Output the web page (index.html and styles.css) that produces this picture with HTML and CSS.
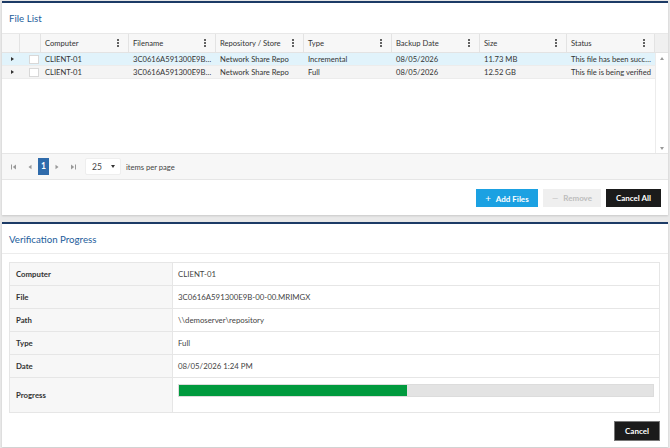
FILE: index.html
```html
<!DOCTYPE html>
<html lang="en">
<head>
    <meta charset="UTF-8">
    <meta name="viewport" content="width=device-width, initial-scale=1.0">
    <title>File Verification</title>
    <link rel="stylesheet" href="styles.css">
</head>
<body>
    <div class="panel files">
        <div class="panel-title">File List</div>

        <div class="grid">
            <div class="grid-head">
                <div class="hcell"></div>
                <div class="hcell"></div>
                <div class="hcell">Computer <span class="kebab"><i></i><i></i><i></i></span></div>
                <div class="hcell">Filename <span class="kebab"><i></i><i></i><i></i></span></div>
                <div class="hcell">Repository / Store <span class="kebab"><i></i><i></i><i></i></span></div>
                <div class="hcell">Type <span class="kebab"><i></i><i></i><i></i></span></div>
                <div class="hcell">Backup Date <span class="kebab"><i></i><i></i><i></i></span></div>
                <div class="hcell">Size <span class="kebab"><i></i><i></i><i></i></span></div>
                <div class="hcell">Status <span class="kebab"><i></i><i></i><i></i></span></div>
                <div class="hcell"></div>
            </div>

            <div class="grid-body">
                <div class="rows">
                    <div class="row selected">
                        <div class="cell expander"><span class="tri-right"></span></div>
                        <div class="cell check"><span class="box"></span></div>
                        <div class="cell">CLIENT-01</div>
                        <div class="cell">3C0616A591300E9B-00-00.MRIMGX</div>
                        <div class="cell">Network Share Repo</div>
                        <div class="cell">Incremental</div>
                        <div class="cell">08/05/2026</div>
                        <div class="cell">11.73 MB</div>
                        <div class="cell">This file has been successfully verified</div>
                    </div>
                    <div class="row alt">
                        <div class="cell expander"><span class="tri-right"></span></div>
                        <div class="cell check"><span class="box"></span></div>
                        <div class="cell">CLIENT-01</div>
                        <div class="cell">3C0616A591300E9B-00-01.MRIMGX</div>
                        <div class="cell">Network Share Repo</div>
                        <div class="cell">Full</div>
                        <div class="cell">08/05/2026</div>
                        <div class="cell">12.52 GB</div>
                        <div class="cell">This file is being verified</div>
                    </div>
                </div>
                <div class="scrollbar">
                    <span class="sb-up"></span>
                    <span class="sb-down"></span>
                </div>
            </div>
        </div>

        <div class="pager">
            <span class="pg-icon">
                <svg width="6" height="6" viewBox="0 0 6 6"><rect x="0" y="0.5" width="1" height="5" fill="#999"/><path d="M5 0.5 L1.8 3 L5 5.5 Z" fill="#999"/></svg>
            </span>
            <span class="pg-icon">
                <svg width="6" height="6" viewBox="0 0 6 6"><path d="M4.5 0.8 L1.5 3 L4.5 5.2 Z" fill="#999"/></svg>
            </span>
            <span class="pg-current">1</span>
            <span class="pg-icon">
                <svg width="6" height="6" viewBox="0 0 6 6"><path d="M1.5 0.8 L4.5 3 L1.5 5.2 Z" fill="#999"/></svg>
            </span>
            <span class="pg-icon">
                <svg width="6" height="6" viewBox="0 0 6 6"><path d="M1 0.5 L4.2 3 L1 5.5 Z" fill="#999"/><rect x="5" y="0.5" width="1" height="5" fill="#999"/></svg>
            </span>
            <span class="pg-size">25 <span class="tri-down"></span></span>
            <span class="pg-label">items per page</span>
        </div>

        <div class="actions">
            <button class="btn btn-blue"><span class="plus">+</span> Add Files</button>
            <button class="btn btn-muted"><span class="minus">&mdash;</span> Remove</button>
            <button class="btn btn-dark">Cancel All</button>
        </div>
    </div>

    <div class="panel progress">
        <div class="panel-title bordered">Verification Progress</div>

        <table class="details">
            <tr><th>Computer</th><td>CLIENT-01</td></tr>
            <tr><th>File</th><td>3C0616A591300E9B-00-00.MRIMGX</td></tr>
            <tr><th>Path</th><td>\\demoserver\repository</td></tr>
            <tr><th>Type</th><td>Full</td></tr>
            <tr><th>Date</th><td>08/05/2026 1:24 PM</td></tr>
            <tr class="progress-row">
                <th>Progress</th>
                <td><div class="bar"><div class="bar-fill" style="width: 48%"></div></div></td>
            </tr>
        </table>

        <div class="footer">
            <button class="btn btn-dark btn-cancel">Cancel</button>
        </div>
    </div>
</body>
</html>
```

FILE: styles.css
```css
* {
    margin: 0;
    padding: 0;
    box-sizing: border-box;
}

body {
    font-family: Lato, "Open Sans", sans-serif;
    font-size: 7.6px;
    color: #333;
    background: #e9e9e9;
    padding: 1px 2px;
}

.panel {
    background: white;
    border-top: 2px solid #1c3b66;
    box-shadow: 0 1px 2px rgba(0,0,0,0.15);
}

.panel + .panel {
    margin-top: 7px;
}

.panel-title {
    height: 30px;
    line-height: 30px;
    padding-left: 7px;
    font-size: 9.7px;
    color: #235d9b;
}

.panel-title.bordered {
    border-bottom: 1px solid #ececec;
}

/* file grid */
.grid-head {
    display: grid;
    grid-template-columns: 18px 21px 88px 87px 88px 88px 88px 87px 88px 13px;
    height: 20px;
    background: #f7f7f7;
    border-top: 1px solid #e8e8e8;
    border-bottom: 1px solid #e3e3e3;
}

.hcell {
    display: flex;
    align-items: center;
    justify-content: space-between;
    padding: 0 9px 0 4px;
    border-right: 1px solid #e3e3e3;
    color: #333;
    white-space: nowrap;
}

.hcell:last-child {
    border-right: none;
    background: #f0f0f0;
}

.kebab {
    display: flex;
    flex-direction: column;
    gap: 1.5px;
}

.kebab i {
    width: 1.6px;
    height: 1.6px;
    background: #444;
    border-radius: 50%;
}

.grid-body {
    display: flex;
    height: 100px;
}

.rows {
    flex: 1;
}

.row {
    display: grid;
    grid-template-columns: 18px 21px 88px 87px 88px 88px 88px 87px 88px;
    height: 13px;
    border-bottom: 1px solid #ececec;
}

.row.selected { background: #e1f3fb; }
.row.alt { background: #f4f4f4; }

.cell {
    padding: 0 4px;
    line-height: 12px;
    white-space: nowrap;
    overflow: hidden;
    text-overflow: ellipsis;
    color: #333;
}

.cell.expander,
.cell.check {
    display: flex;
    align-items: center;
    justify-content: center;
    padding: 0;
}

.tri-right {
    width: 0;
    height: 0;
    border-top: 2px solid transparent;
    border-bottom: 2px solid transparent;
    border-left: 3px solid #333;
    margin-left: 2px;
}

.box {
    width: 10px;
    height: 9px;
    background: white;
    border: 1px solid #d8d8d8;
    margin-left: 7px;
}

.scrollbar {
    width: 13px;
    border-left: 1px solid #ececec;
    display: flex;
    flex-direction: column;
    justify-content: space-between;
    align-items: center;
    padding: 4px 0 3px;
}

.sb-up,
.sb-down {
    width: 0;
    height: 0;
    border-left: 2.5px solid transparent;
    border-right: 2.5px solid transparent;
}

.sb-up { border-bottom: 3px solid #999; }
.sb-down { border-top: 3px solid #999; }

/* pager */
.pager {
    height: 27px;
    display: flex;
    align-items: center;
    padding-left: 4px;
    background: #f7f7f7;
    border-top: 1px solid #e6e6e6;
    border-bottom: 1px solid #e6e6e6;
}

.pg-icon {
    width: 16px;
    display: flex;
    justify-content: center;
    align-items: center;
}

.pg-current {
    width: 11px;
    height: 17px;
    line-height: 17px;
    text-align: center;
    background: #2f6bab;
    color: white;
    font-weight: bold;
    font-size: 8.5px;
}

.pg-size {
    width: 36px;
    height: 17px;
    margin-left: 4px;
    display: flex;
    align-items: center;
    justify-content: space-between;
    padding: 0 5px 0 6px;
    background: white;
    border: 1px solid #eeeeee;
    border-radius: 2px;
    font-size: 8.5px;
    color: #444;
}

.tri-down {
    width: 0;
    height: 0;
    border-left: 2.5px solid transparent;
    border-right: 2.5px solid transparent;
    border-top: 3px solid #333;
}

.pg-label {
    margin-left: 5px;
    color: #444;
}

/* buttons */
.actions {
    height: 35px;
    display: flex;
    justify-content: flex-end;
    align-items: center;
    gap: 5px;
    padding-right: 7px;
}

.btn {
    font-family: Lato, "Open Sans", sans-serif;
    font-size: 8px;
    font-weight: bold;
    height: 18px;
    border: none;
    color: white;
}

.btn-blue {
    width: 62px;
    background: #1ba1e2;
}

.btn-muted {
    width: 58px;
    background: #efefef;
    color: #bdbdbd;
}

.btn-dark {
    width: 55px;
    background: #1b1b1b;
}

.plus {
    font-weight: normal;
    font-size: 10px;
    margin-right: 3px;
}

.minus {
    font-weight: normal;
    margin-right: 3px;
}

/* verification details */
.details {
    margin: 8px 8px 0 7px;
    width: calc(100% - 15px);
    border-collapse: collapse;
}

.details th,
.details td {
    height: 23px;
    border: 1px solid #e6e6e6;
    text-align: left;
    font-size: 7.8px;
}

.details th {
    width: 163px;
    padding-left: 6px;
    background: #f7f7f7;
    font-weight: bold;
    color: #333;
}

.details td {
    padding-left: 5px;
    color: #444;
}

.details .progress-row th,
.details .progress-row td {
    height: 35px;
}

.details .progress-row td {
    vertical-align: top;
    padding: 6px 5px 0;
}

.bar {
    height: 13px;
    background: #e3e3e3;
    border: 1px solid #dcdcdc;
}

.bar-fill {
    height: 100%;
    background: #009a3e;
}

.footer {
    display: flex;
    justify-content: flex-end;
    padding: 8px 8px 6px;
}

.btn-cancel {
    width: 46px;
    height: 20px;
    border: 1px solid #777;
}
```
